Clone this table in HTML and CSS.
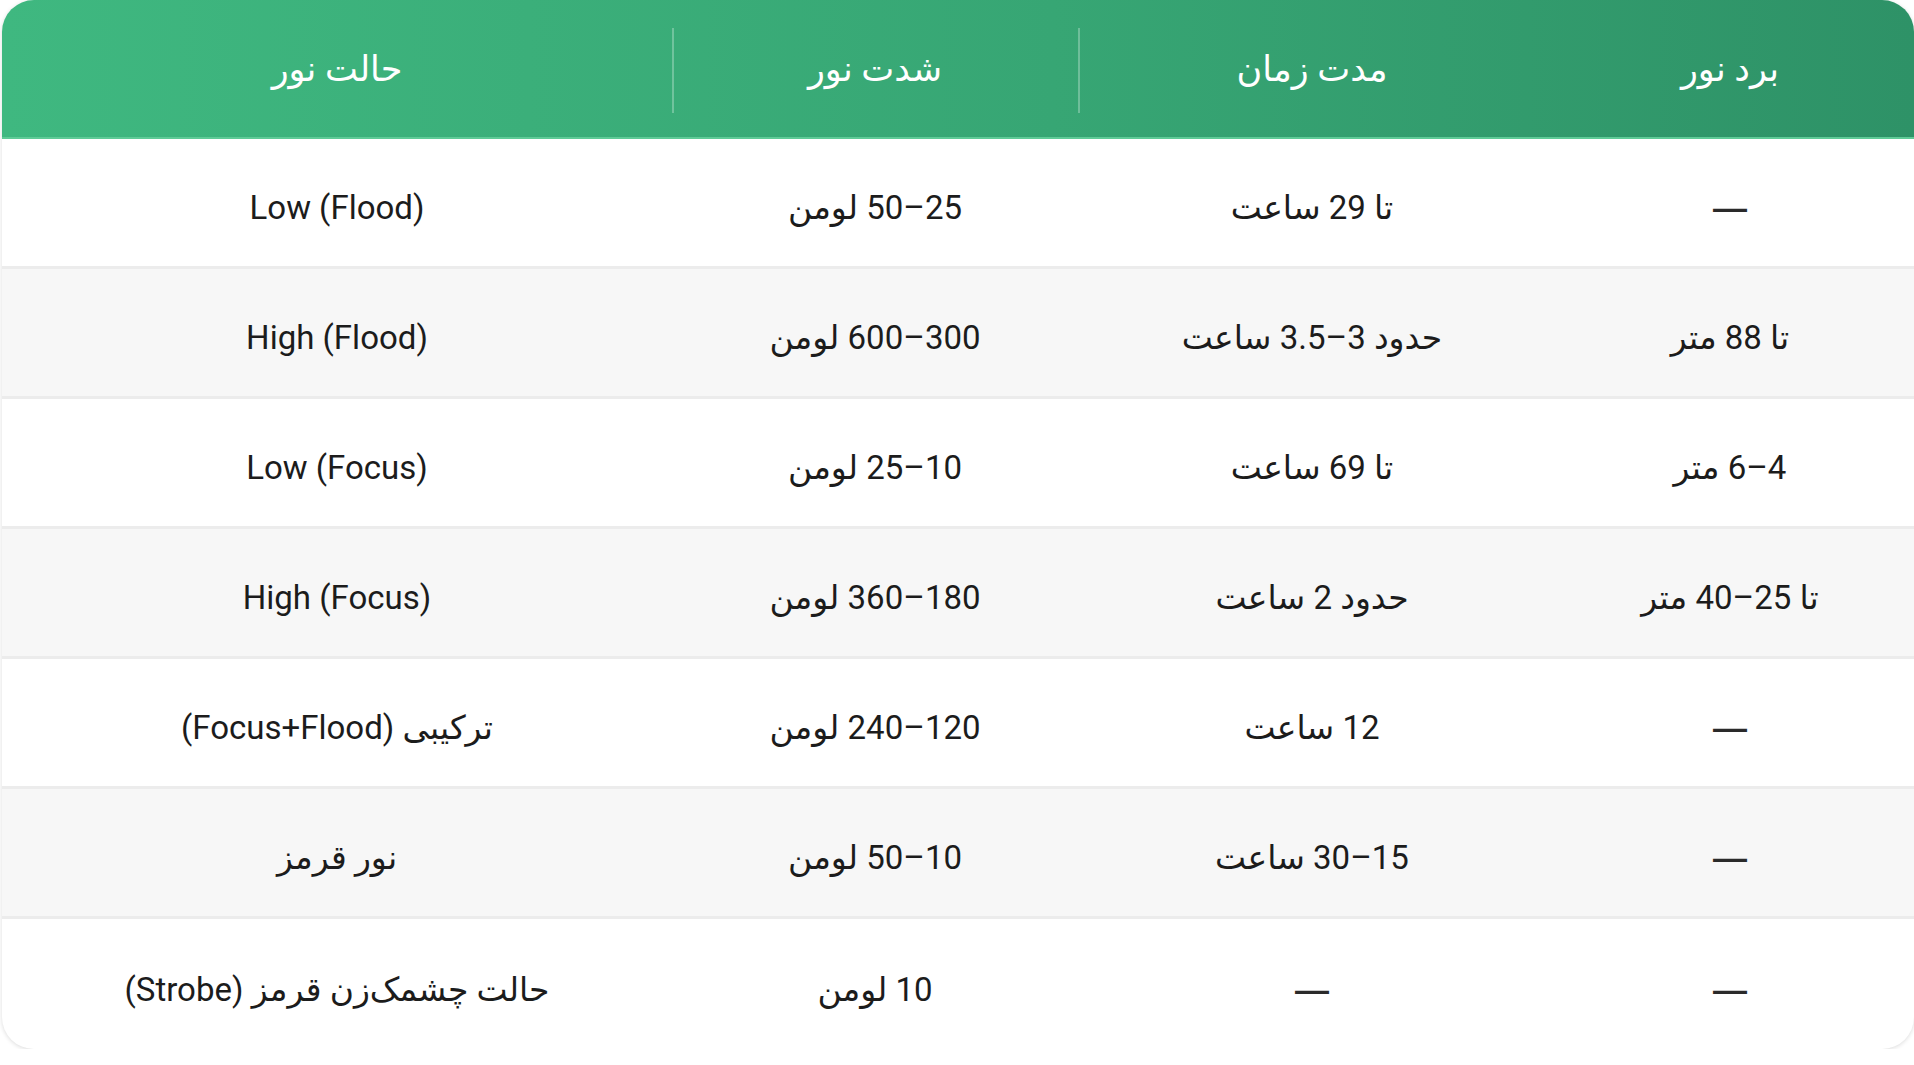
FILE: index.html
```html
<!DOCTYPE html>
<html lang="fa" dir="rtl">
<head>
<meta charset="utf-8">
<title>جدول حالت‌های نور</title>
<link rel="stylesheet" href="styles.css">
</head>
<body>
<div class="card">
  <table class="spec">
    <colgroup>
      <col class="c-range">
      <col class="c-time">
      <col class="c-power">
      <col class="c-mode">
    </colgroup>
    <thead>
      <tr>
        <th>برد نور</th>
        <th>مدت زمان</th>
        <th>شدت نور</th>
        <th>حالت نور</th>
      </tr>
    </thead>
    <tbody>
      <tr>
        <td><span class="dash">—</span></td>
        <td>تا 29 ساعت</td>
        <td>25–50 لومن</td>
        <td>Low (Flood)</td>
      </tr>
      <tr>
        <td>تا 88 متر</td>
        <td>حدود 3–3.5 ساعت</td>
        <td>300–600 لومن</td>
        <td>High (Flood)</td>
      </tr>
      <tr>
        <td>4–6 متر</td>
        <td>تا 69 ساعت</td>
        <td>10–25 لومن</td>
        <td>Low (Focus)</td>
      </tr>
      <tr>
        <td>تا 25–40 متر</td>
        <td>حدود 2 ساعت</td>
        <td>180–360 لومن</td>
        <td>High (Focus)</td>
      </tr>
      <tr>
        <td><span class="dash">—</span></td>
        <td>12 ساعت</td>
        <td>120–240 لومن</td>
        <td>ترکیبی (Focus+Flood)</td>
      </tr>
      <tr>
        <td><span class="dash">—</span></td>
        <td>15–30 ساعت</td>
        <td>10–50 لومن</td>
        <td>نور قرمز</td>
      </tr>
      <tr>
        <td><span class="dash">—</span></td>
        <td><span class="dash">—</span></td>
        <td>10 لومن</td>
        <td>حالت چشمک‌زن قرمز (Strobe)</td>
      </tr>
    </tbody>
  </table>
</div>
</body>
</html>
```

FILE: styles.css
```css
html, body {
  margin: 0;
  padding: 0;
  background: #ffffff;
}

body {
  font-family: Roboto, "DejaVu Sans", sans-serif;
  color: #1c1c1c;
}

.card {
  width: 1912px;
  border-radius: 32px;
  overflow: hidden;
  background: #ffffff;
  box-shadow: 0 1px 4px rgba(0, 0, 0, 0.14);
}

.spec {
  width: 100%;
  border-collapse: separate;
  border-spacing: 0;
  table-layout: fixed;
}

.c-range { width: 368px; }
.c-time { width: 468px; }
.c-power { width: 406px; }
.c-mode { width: 670px; }

.spec thead tr {
  background: linear-gradient(90deg, #3fb880 0%, #37a674 55%, #2e9267 100%);
}

.spec th {
  position: relative;
  height: 135px;
  padding: 2px 0 0;
  border-bottom: 2px solid #5fcb97;
  color: #ffffff;
  font-weight: 400;
  font-size: 35px;
  text-align: center;
  vertical-align: middle;
}

.spec th:nth-child(2)::after,
.spec th:nth-child(3)::after {
  content: "";
  position: absolute;
  left: 0;
  top: 28px;
  bottom: 24px;
  width: 2px;
  background: rgba(255, 255, 255, 0.28);
}

.spec td {
  height: 117px;
  padding: 10px 0 0;
  border-bottom: 3px solid #ececec;
  font-size: 33px;
  text-align: center;
  vertical-align: middle;
}

.spec tbody tr:nth-child(even) td {
  background: #f7f7f7;
}

.spec tbody tr:last-child td {
  border-bottom: 0;
  height: 120px;
}

.dash {
  font-family: "Liberation Sans", sans-serif;
  font-size: 34px;
  font-weight: 700;
  color: #2a2a2a;
}
```
